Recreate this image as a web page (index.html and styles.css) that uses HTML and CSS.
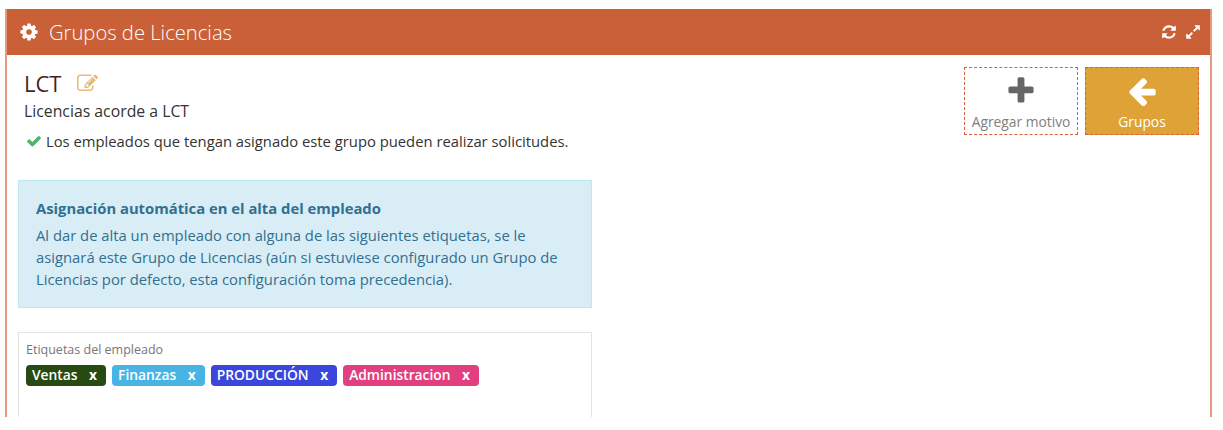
FILE: index.html
```html
<!DOCTYPE html>
<html lang="es">
<head>
    <meta charset="UTF-8">
    <title>Grupos de Licencias</title>
    <link rel="stylesheet" href="styles.css">
</head>
<body>
    <div class="panel">
        <div class="panel-heading">
            <div class="panel-title">
                <svg class="icon icon-cog" viewBox="0 0 1792 1792"><path d="M1152 896q0-106-75-181t-181-75-181 75-75 181 75 181 181 75 181-75 75-181zm512-109v222q0 12-8 23t-20 13l-185 28q-19 54-39 91 35 50 107 138 10 12 10 25t-9 23q-27 37-99 108t-94 71q-12 0-26-9l-138-108q-44 23-91 38-16 136-29 186-7 28-36 28h-222q-14 0-24.5-8.5t-11.5-21.5l-28-184q-49-16-90-37l-141 107q-10 9-25 9-14 0-25-11-126-114-165-168-7-10-7-23 0-12 8-23 15-21 51-66.5t54-70.5q-27-50-41-99l-183-27q-13-2-21-12.5t-8-23.5v-222q0-12 8-23t19-13l186-28q14-46 39-92-40-57-107-138-10-12-10-24 0-10 9-23 26-36 98.5-107.5t94.5-71.5q13 0 26 10l138 107q44-23 91-38 16-136 29-186 7-28 36-28h222q14 0 24.5 8.5t11.5 21.5l28 184q49 16 90 37l142-107q9-9 24-9 13 0 25 10 129 119 165 170 7 8 7 22 0 12-8 23-15 21-51 66.5t-54 70.5q26 50 41 98l183 28q13 2 21 12.5t8 23.5z"/></svg>
                <span>Grupos de Licencias</span>
            </div>
            <div class="panel-tools">
                <svg class="icon icon-tool" viewBox="0 0 1792 1792"><path d="M1639 1056q0 5-1 7-64 268-268 434.5t-478 166.5q-146 0-282.5-55t-243.5-157l-129 129q-19 19-45 19t-45-19-19-45v-448q0-26 19-45t45-19h448q26 0 45 19t19 45-19 45l-137 137q71 66 161 102t187 36q134 0 250-65t186-179q11-17 53-117 8-23 30-23h192q13 0 22.5 9.5t9.5 22.5zm25-800v448q0 26-19 45t-45 19h-448q-26 0-45-19t-19-45 19-45l138-138q-148-137-349-137-134 0-250 65t-186 179q-11 17-53 117-8 23-30 23h-199q-13 0-22.5-9.5t-9.5-22.5v-7q65-268 270-434.5t480-166.5q146 0 284 55.5t245 156.5l130-129q19-19 45-19t45 19 19 45z"/></svg>
                <svg class="icon icon-tool" viewBox="0 0 1792 1792"><path d="M883 1056q0 13-10 23l-332 332 144 144q19 19 19 45t-19 45-45 19h-448q-26 0-45-19t-19-45v-448q0-26 19-45t45-19 45 19l144 144 332-332q10-10 23-10t23 10l114 114q10 10 10 23zm781-864v448q0 26-19 45t-45 19-45-19l-144-144-332 332q-10 10-23 10t-23-10l-114-114q-10-10-10-23t10-23l332-332-144-144q-19-19-19-45t19-45 45-19h448q26 0 45 19t19 45z"/></svg>
            </div>
        </div>
        <div class="panel-body">
            <div class="group-info">
                <div class="group-top">
                    <div class="group-text">
                        <h3 class="group-name">
                            LCT
                            <svg class="icon icon-edit" viewBox="0 0 1792 1792"><path d="M888 1184l116-116-152-152-116 116v56h96v96h56zm440-720q-16-16-33 1l-350 350q-17 17-1 33t33-1l350-350q17-17 1-33zm80 594v190q0 119-84.5 203.5t-203.5 84.5h-832q-119 0-203.5-84.5t-84.5-203.5v-832q0-119 84.5-203.5t203.5-84.5h832q63 0 117 25 15 7 18 23 3 17-9 29l-49 49q-14 14-32 8-23-6-45-6h-832q-66 0-113 47t-47 113v832q0 66 47 113t113 47h832q66 0 113-47t47-113v-126q0-13 9-22l64-64q15-15 35-7t20 29zm-96-738l288 288-672 672h-288v-288zm444 132l-92 92-288-288 92-92q28-28 68-28t68 28l152 152q28 28 28 68t-28 68z"/></svg>
                        </h3>
                        <p class="group-desc">Licencias acorde a LCT</p>
                        <p class="group-check">
                            <svg class="icon icon-check" viewBox="0 0 1792 1792"><path d="M1671 566q0 40-28 68l-724 724-136 136q-28 28-68 28t-68-28l-136-136-362-362q-28-28-28-68t28-68l136-136q28-28 68-28t68 28l294 295 656-657q28-28 68-28t68 28l136 136q28 28 28 68z"/></svg>
                            Los empleados que tengan asignado este grupo pueden realizar solicitudes.
                        </p>
                    </div>
                    <div class="shortcuts">
                        <a class="shortcut">
                            <svg class="icon icon-big" viewBox="0 0 1792 1792"><path d="M1600 736v192q0 40-28 68t-68 28h-416v416q0 40-28 68t-68 28h-192q-40 0-68-28t-28-68v-416h-416q-40 0-68-28t-28-68v-192q0-40 28-68t68-28h416v-416q0-40 28-68t68-28h192q40 0 68 28t28 68v416h416q40 0 68 28t28 68z"/></svg>
                            <span>Agregar motivo</span>
                        </a>
                        <a class="shortcut shortcut-primary">
                            <svg class="icon icon-big" viewBox="0 0 1792 1792"><path d="M1664 896v128q0 53-32.5 90.5t-84.5 37.5h-704l293 294q38 36 38 90t-38 90l-75 76q-37 37-90 37-52 0-91-37l-651-652q-37-37-37-90 0-52 37-91l651-650q38-38 91-38 52 0 90 38l75 74q38 38 38 91t-38 91l-293 293h704q52 0 84.5 37.5t32.5 90.5z"/></svg>
                            <span>Grupos</span>
                        </a>
                    </div>
                </div>
            </div>
            <div class="left-col">
                <div class="alert-info">
                    <h4>Asignación automática en el alta del empleado</h4>
                    <p>Al dar de alta un empleado con alguna de las siguientes etiquetas, se le asignará este Grupo de Licencias (aún si estuviese configurado un Grupo de Licencias por defecto, esta configuración toma precedencia).</p>
                </div>
                <div class="tags-box">
                    <label class="tags-label">Etiquetas del empleado</label>
                    <div class="tags">
                        <span class="tag tag-green">Ventas <b>x</b></span>
                        <span class="tag tag-sky">Finanzas <b>x</b></span>
                        <span class="tag tag-blue">PRODUCCIÓN <b>x</b></span>
                        <span class="tag tag-pink">Administracion <b>x</b></span>
                    </div>
                </div>
            </div>
        </div>
    </div>
</body>
</html>
```

FILE: styles.css
```css
html, body {
    margin: 0;
    padding: 0;
    background-color: #fff;
    overflow: hidden;
}

body {
    height: 430px;
    font-family: "Open Sans", sans-serif;
    font-size: 14.8px;
    color: #333;
}

.icon {
    display: block;
    fill: currentColor;
    flex: none;
}

.panel {
    box-sizing: border-box;
    margin: 9px 11px 0 5px;
    height: 408px;
    overflow: hidden;
    border: 2px solid #e59a80;
    border-top: none;
    border-bottom: none;
}

.panel-heading {
    display: flex;
    align-items: center;
    justify-content: space-between;
    height: 46px;
    margin: 0 -2px;
    padding: 0 11px 0 14px;
    background-color: #c96038;
    color: #fff;
}

.panel-title {
    display: flex;
    align-items: center;
    gap: 10px;
    font-size: 20.2px;
    font-weight: 300;
}

.icon-cog {
    width: 20px;
    height: 20px;
}

.panel-tools {
    display: flex;
    gap: 8px;
}

.icon-tool {
    width: 16px;
    height: 16px;
}

.panel-body {
    padding: 12px 11px 0 11px;
}

.group-top {
    display: flex;
    justify-content: space-between;
}

.group-text {
    padding-left: 6px;
}

.group-name {
    display: flex;
    align-items: center;
    gap: 16px;
    margin: 1px 0 0;
    font-size: 22px;
    line-height: 30px;
    font-weight: 400;
    color: #4a1e1e;
}

.icon-edit {
    width: 21px;
    height: 21px;
    color: #e8b878;
}

.group-desc {
    margin: 3px 0 0;
    font-size: 15.8px;
    line-height: 20px;
}

.group-check {
    display: flex;
    align-items: center;
    gap: 4px;
    margin: 10px 0 0 2px;
    line-height: 20px;
}

.icon-check {
    width: 16px;
    height: 16px;
    color: #52b36b;
}

.shortcuts {
    display: flex;
    gap: 7px;
}

.shortcut {
    box-sizing: border-box;
    display: flex;
    flex-direction: column;
    align-items: center;
    width: 114px;
    height: 68px;
    padding-top: 7px;
    border: 1px dashed #d9603a;
    font-size: 13.8px;
    line-height: 18px;
    color: #808080;
}

.shortcut span {
    margin-top: 6px;
}

.icon-big {
    width: 32px;
    height: 32px;
    color: #666;
}

.shortcut-primary {
    background-color: #dfa237;
    color: #fff;
}

.shortcut-primary .icon-big {
    color: #fff;
}

.left-col {
    width: 574px;
    margin-top: 29px;
}

.alert-info {
    box-sizing: border-box;
    height: 128px;
    padding: 17px 17px 0;
    background-color: #d9edf7;
    border: 1px solid #bce8f1;
    color: #31708f;
}

.alert-info h4 {
    margin: 0;
    font-size: 14.8px;
    line-height: 20px;
    font-weight: 700;
}

.alert-info p {
    margin: 6px 0 0;
    line-height: 22px;
}

.tags-box {
    box-sizing: border-box;
    height: 90px;
    margin-top: 24px;
    padding: 8px 7px 0;
    border: 1px solid #e3e3e3;
}

.tags-label {
    display: block;
    font-size: 12.5px;
    line-height: 17px;
    color: #777;
}

.tags {
    display: flex;
    gap: 6px;
    margin-top: 7px;
}

.tag {
    display: block;
    padding: 0 9px 0 6px;
    height: 21px;
    line-height: 20px;
    border-radius: 4px;
    font-size: 13.8px;
    font-weight: 600;
    color: #fff;
    white-space: nowrap;
}

.tag b {
    margin-left: 8px;
    font-weight: 700;
}

.tag-green { background-color: #264a12; }
.tag-sky { background-color: #47b4e4; }
.tag-blue { background-color: #3a46dc; }
.tag-pink { background-color: #e23f80; }
```
